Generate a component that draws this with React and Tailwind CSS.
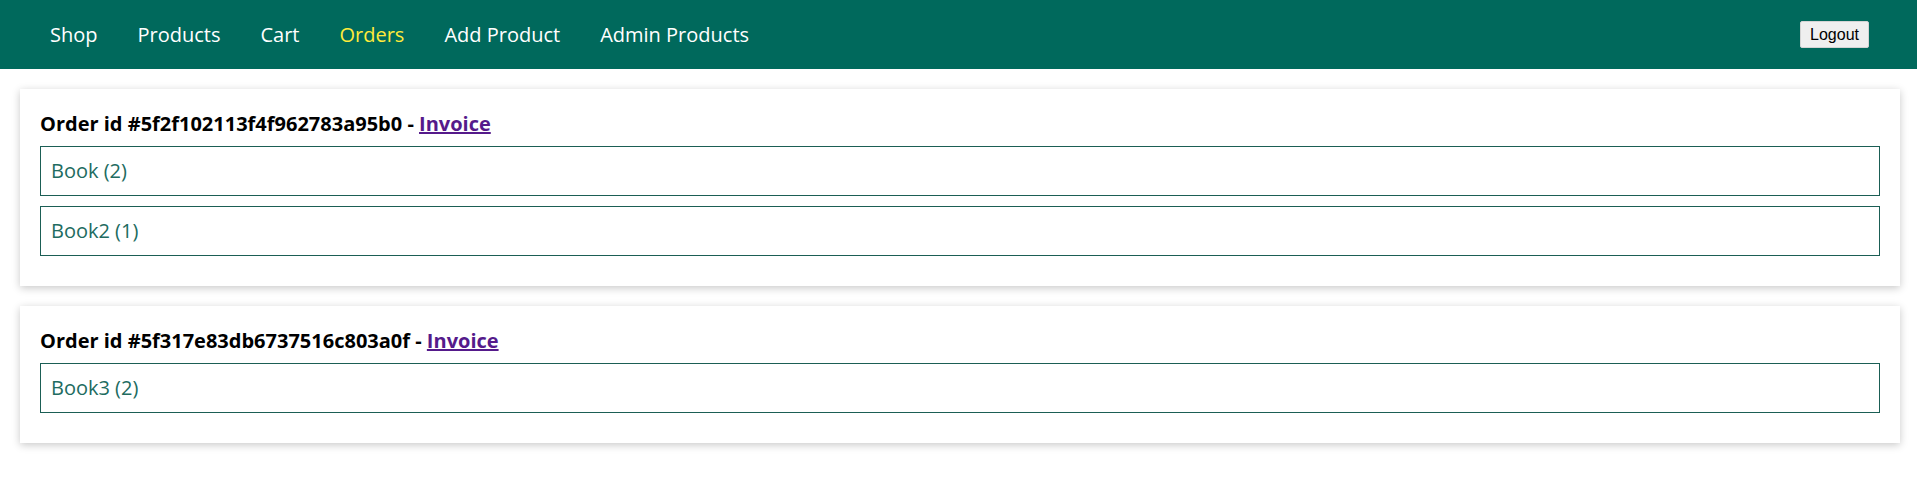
const navItems = [
  { label: "Shop" },
  { label: "Products" },
  { label: "Cart" },
  { label: "Orders", active: true },
  { label: "Add Product" },
  { label: "Admin Products" },
];

const orders = [
  { id: "5f2f102113f4f962783a95b0", items: ["Book (2)", "Book2 (1)"] },
  { id: "5f317e83db6737516c803a0f", items: ["Book3 (2)"] },
];

const Header = () => {
  return (
    <header className="h-[69px] bg-[#00695c] flex items-center justify-between pl-[50px] pr-[48px]">
      <nav className="flex items-center gap-[40px]">
        {navItems.map((item) => (
          <a
            key={item.label}
            href="#"
            className={`text-[20px] leading-[30px] ${item.active ? "text-[#ffeb3b]" : "text-white"}`}
          >
            {item.label}
          </a>
        ))}
      </nav>
      <button className="h-[27px] px-[9px] bg-[#efefef] border border-[#d4d4d4] rounded-[2px] text-[16px] leading-[18px] text-black font-['Liberation_Sans',Arial,sans-serif]">
        Logout
      </button>
    </header>
  );
};

const OrderCard = ({ order }) => {
  return (
    <li className="bg-white ml-[20px] mr-[17px] mb-[20px] px-5 pt-5 pb-[30px] shadow-[0_2px_8px_rgba(0,0,0,0.22)]">
      <h1 className="text-[20px] leading-[29px] font-bold text-black mb-2">
        Order id #{order.id} -{" "}
        <a href="#" className="text-[#551a8b] underline">
          Invoice
        </a>
      </h1>
      <ul>
        {order.items.map((item) => (
          <li
            key={item}
            className="border border-[#1b5e55] text-[#216b60] text-[20px] leading-[30px] py-[9px] px-[10px] mb-[10px] last:mb-0"
          >
            {item}
          </li>
        ))}
      </ul>
    </li>
  );
};

export default function App() {
  return (
    <div className="min-h-[486px] bg-white font-['Open_Sans',sans-serif]">
      <Header />
      <ul className="pt-[20px]">
        {orders.map((order) => (
          <OrderCard key={order.id} order={order} />
        ))}
      </ul>
    </div>
  );
}
